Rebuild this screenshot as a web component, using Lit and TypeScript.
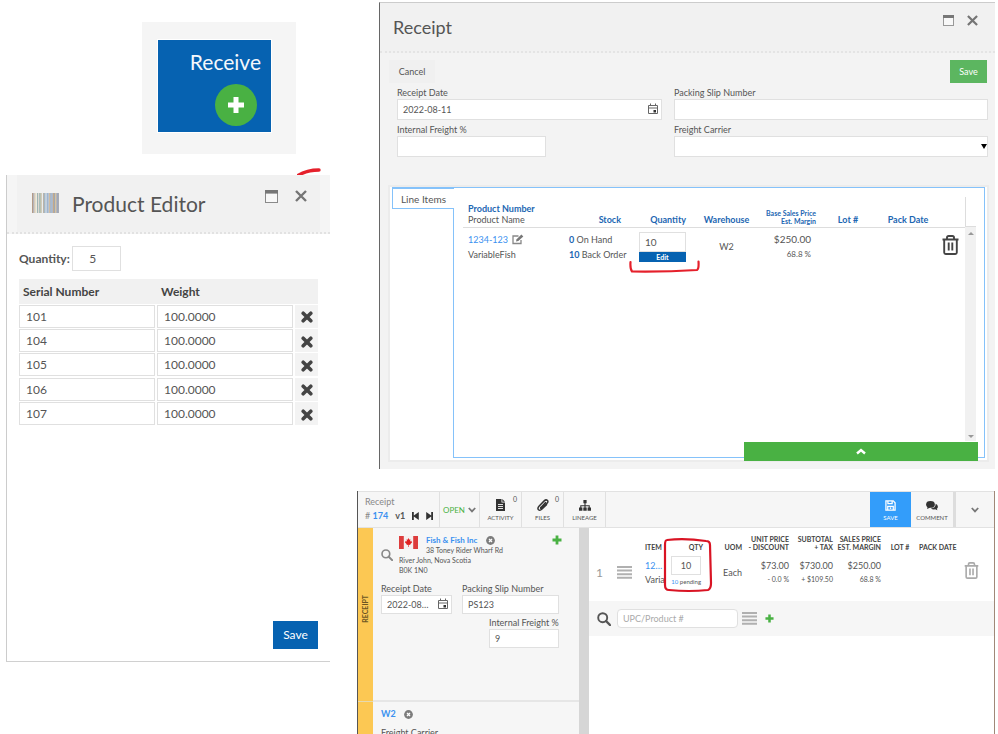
import { LitElement, html, css, svg } from "lit";
import { customElement, state } from "lit/decorators.js";

const closeIcon = html`<svg viewBox="0 0 12 12" width="12" height="12" aria-hidden="true"><path d="M1 1L11 11M11 1L1 11" stroke="#757575" stroke-width="2.4" fill="none"/></svg>`;
const windowIcon = html`<svg viewBox="0 0 13 13" width="13" height="13" aria-hidden="true"><rect x=".5" y=".5" width="12" height="12" fill="#f8f8f8" stroke="#8a8a8a"/><rect width="13" height="3.6" fill="#777"/></svg>`;
const smallWindowIcon = html`<svg viewBox="0 0 11 11" width="11" height="11" aria-hidden="true"><rect x=".5" y=".5" width="10" height="10" fill="#f8f8f8" stroke="#999"/><rect width="11" height="3" fill="#777"/></svg>`;
const smallCloseIcon = html`<svg viewBox="0 0 12 12" width="11" height="11" aria-hidden="true"><path d="M1 1L11 11M11 1L1 11" stroke="#757575" stroke-width="2.4" fill="none"/></svg>`;
const calendarIcon = html`<svg viewBox="0 0 10 12" width="10" height="12" aria-hidden="true"><path d="M.5 2.5H9.5V10.5H.5ZM.5 5H9.5M2.5 .5V3M7.5 .5V3" fill="none" stroke="#666"/><rect x="5.5" y="7" width="2.5" height="2.5" fill="#333"/></svg>`;
const plusIcon = (size: number) => html`<svg viewBox="0 0 10 10" width=${size} height=${size} aria-hidden="true"><path d="M5 .5V9.5M.5 5H9.5" stroke="#49b143" stroke-width="2.8"/></svg>`;
const crossIcon = html`<svg viewBox="0 0 12 12" width="12" height="12" aria-hidden="true"><path d="M2.2 2.2L9.8 9.8M9.8 2.2L2.2 9.8" stroke="#444" stroke-width="3.6" stroke-linecap="round"/></svg>`;
const searchIcon = (size: number, color: string) => html`<svg viewBox="0 0 14 14" width=${size} height=${size} aria-hidden="true"><circle cx="5.7" cy="5.7" r="4.5" fill="none" stroke=${color} stroke-width="1.9"/><path d="M9 9L13 13" stroke=${color} stroke-width="2.4" stroke-linecap="round"/></svg>`;
const barsIcon = html`<svg viewBox="0 0 15 13" width="15" height="13" aria-hidden="true"><path d="M0 1H15M0 4.6H15M0 8.2H15M0 11.8H15" stroke="#b0b0b0" stroke-width="2"/></svg>`;
const trashIcon = (w: number, h: number, color: string) => html`<svg viewBox="0 0 17 20" width=${w} height=${h} aria-hidden="true"><path d="M.5 4.5H16.5M5 4V2.6Q5 1 6.6 1H10.4Q12 1 12 2.6V4M2.2 4.5V17.5Q2.2 19 3.7 19H13.3Q14.8 19 14.8 17.5V4.5M6.7 7.5V15.5M10.3 7.5V15.5" fill="none" stroke=${color} stroke-width="1.9"/></svg>`;
const clearIcon = html`<svg viewBox="0 0 9 9" width="9" height="9" aria-hidden="true"><circle cx="4.5" cy="4.5" r="4.4" fill="#7d7d7d"/><path d="M3 3L6 6M6 3L3 6" stroke="#fff" stroke-width="1.3"/></svg>`;
const chevronIcon = html`<svg viewBox="0 0 8 6" width="8" height="6" aria-hidden="true"><path d="M.8 1L4 4.4L7.2 1" fill="none" stroke="#777" stroke-width="1.8"/></svg>`;
const editIcon = html`<svg viewBox="0 0 12 11" width="12" height="11" aria-hidden="true"><path d="M9 6V9.5H1V2H6.5" fill="none" stroke="#888" stroke-width="1.3"/><path d="M4 7.5L4.6 5.3L9.4 .6L11.3 2.4L6.3 7.1Z" fill="#777"/></svg>`;
const documentIcon = html`<svg viewBox="0 0 9 12" width="9" height="12" aria-hidden="true"><path d="M0 0H5.5V3.5H9V12H0Z M6.3 0L9 2.8H6.3Z" fill="#333"/><path d="M2 5.5H7M2 7.5H7M2 9.5H7" stroke="#f6f6f6" stroke-width=".9"/></svg>`;
const clipIcon = html`<svg viewBox="0 0 12 12" width="12" height="12" aria-hidden="true"><path d="M8.6 3.6L4.2 8.2Q3.2 9 3.9 9.6Q4.5 10 5.4 9.1L9.8 4.6Q11.7 2.6 10.3 1.3Q8.9 .2 7.2 1.9L2.2 7Q.1 9.3 1.5 10.7Q3 12 5 10L9.5 5.6" fill="none" stroke="#333" stroke-width="1.5" stroke-linecap="round"/></svg>`;
const treeIcon = html`<svg viewBox="0 0 12 11" width="12" height="11" aria-hidden="true"><path d="M6 2V9M1.8 9V5.7H10.2V9" fill="none" stroke="#333" stroke-width="1.1"/><path d="M4.4 0H7.6V3.2H4.4ZM0 7.5H3.4V10.7H0ZM4.3 7.5H7.7V10.7H4.3ZM8.6 7.5H12V10.7H8.6Z" fill="#333"/></svg>`;
const diskIcon = html`<svg viewBox="0 0 12 12" width="11" height="11" aria-hidden="true"><path d="M1 1H9L11 3V11H1Z M3.2 1V4H7.8V1 M3 11V7H9V11" fill="none" stroke="#fff" stroke-width="1.4"/><circle cx="6" cy="8.8" r="1" fill="#fff"/></svg>`;
const chatIcon = html`<svg viewBox="0 0 13 11" width="12" height="10" aria-hidden="true"><ellipse cx="4.8" cy="3.8" rx="4.8" ry="3.7" fill="#333"/><path d="M1.8 6L1 8.7L4.8 7.2Z" fill="#333"/><path d="M10.6 3Q13 4.2 13 6.2Q13 7.6 11.8 8.4L12.5 10.3L9.9 9.2Q7 9.6 5.3 8.2Q10.4 8 10.6 3Z" fill="#333"/></svg>`;
const stepIcon = (back: boolean) => html`<svg viewBox="0 0 7 8" width="7" height="8" aria-hidden="true">${back
  ? svg`<path d="M0 0H1.8V3.4L6.8 0V8L1.8 4.6V8H0Z" fill="#333"/>`
  : svg`<path d="M7 0H5.2V3.4L.2 0V8L5.2 4.6V8H7Z" fill="#333"/>`}</svg>`;
const flagIcon = html`<svg class="flag" viewBox="0 0 19 13" width="19" height="13" role="img" aria-label="Canada"><rect width="19" height="13" fill="#f5f0f0"/><path d="M0 0H4.8V13H0ZM14.2 0H19V13H14.2Z" fill="#dd3c3c"/><path d="M9.5 2L10.4 3.8L11.4 3.3L11.1 5.6L12.7 4.8L12.5 5.9L13.2 6.3L11.2 8.2L11.4 9L9.8 8.8V11H9.2V8.8L7.6 9L7.8 8.2L5.8 6.3L6.5 5.9L6.3 4.8L7.9 5.6L7.6 3.3L8.6 3.8Z" fill="#e02020"/></svg>`;
const barcodeColors = ["#b39b86", "#a9a9b5", "#d8c8a8", "#f4f0e4", "#9fb3b3", "#ddd6cf", "#84a9a3", "#c9bda0", "#e9eef0", "#b8b0a4", "#8fa9bd", "#c8d4dd", "#9db4d0", "#b7c4d2", "#cbb293", "#8aa4c4", "#a4b5cc", "#c4a989", "#9aa3ad", "#d5b98c", "#8796b4", "#a8abb3"];
const barcodeIcon = html`<svg viewBox="0 0 27 20" width="27" height="20" aria-hidden="true">${barcodeColors.map((c, i) => svg`<rect x=${(i * 27) / 22} width="1.25" height="20" fill=${c}/>`)}</svg>`;

@customElement("app-root")
export class AppRoot extends LitElement {
  @state() private serials = ["101", "104", "105", "106", "107"];

  static styles = css`
    :host {
      display: grid;
      grid-template-columns: 330px minmax(0, 1fr);
      column-gap: 27px;
      height: 100vh;
      overflow: hidden;
      padding-right: 3px;
      box-sizing: border-box;
      background: #fff;
      color: #555;
      font-family: Lato, "Open Sans", sans-serif;
      font-size: 10px;
      line-height: 12px;
    }
    * { box-sizing: border-box; }
    svg { display: block; flex: none; }
    button, input, select { font: inherit; color: inherit; margin: 0; border-radius: 0; }
    button { border: 0; padding: 0; background: none; cursor: pointer; }
    input, select { display: block; width: 100%; min-width: 0; background: #fff; border: 1px solid #e0e0e0; padding: 0 5px; text-overflow: ellipsis; }
    a { color: #3a91f0; text-decoration: none; }
    h2 { margin: 0; font-weight: 400; color: #555; }
    table { border-collapse: collapse; border-spacing: 0; table-layout: fixed; width: 100%; }
    th, td { padding: 0; text-align: left; white-space: nowrap; }
    .left { display: flex; flex-direction: column; padding: 22px 0 0 6px; }
    .right { display: flex; flex-direction: column; padding-top: 2px; min-width: 0; }

    .tile-frame { align-self: flex-end; margin-right: 34px; padding: 17px 24px 21px 15px; background: #f5f5f5; }
    .tile { display: flex; flex-direction: column; align-items: flex-end; gap: 10px; width: 115px; height: 94px; padding: 10px 10px 0 0; background: #0662b1; border: 1px solid #fff; color: #f4f8fc; font-size: 21px; line-height: 24px; }
    .tile-plus { display: grid; place-items: center; width: 42px; height: 42px; margin-right: 4px; border-radius: 50%; background: #49b143; }

    .editor { position: relative; margin-top: 21px; height: 487px; border-left: 1px solid #ccc; border-bottom: 1px solid #d0d0d0; display: flex; flex-direction: column; }
    .editor-head { display: flex; align-items: center; height: 59px; padding: 0 10px; background: #f5f5f5; border-bottom: 2px dotted #e2e2e2; }
    .editor-bar { flex: 1; display: flex; align-items: center; align-self: stretch; padding: 0 13px 0 15px; background: #f1f1f1; }
    .editor-bar > svg { margin-bottom: 2px; }
    .editor-bar h2 { margin-left: 13px; flex: 1; font-size: 21px; line-height: 26px; }
    .tools { display: flex; align-items: center; gap: 17px; margin-bottom: 15px; }
    .editor-body { flex: 1; display: flex; flex-direction: column; padding: 12px; font-size: 12px; line-height: 14px; }
    .qty-row { display: flex; align-items: center; gap: 2px; font-weight: 700; color: #555; }
    .qty-row input { width: 49px; height: 25px; text-align: center; padding-right: 12px; font-weight: 400; }
    .serials { margin-top: 8px; height: 147px; }
    .serials thead th { background: #f1f1f1; height: 25px; padding-left: 4px; color: #444; }
    .serials td { padding-right: 2px; }
    .serials td:last-child { padding-right: 0; }
    .serials input { height: 23px; padding: 0 7px 0 6px; }
    .c-button { width: 23px; }
    .c-serial { width: 138px; }
    .remove { display: grid; place-items: center; width: 23px; height: 23px; padding-top: 2px; background: #f3f3f3; }
    .primary { align-self: flex-end; margin-top: auto; width: 45px; height: 28px; background: #0662b1; color: #fff; }

    .modal { margin-left: 22px; height: 467px; background: #f3f3f3; border-left: 1px solid #666; border-top: 1px solid #ccc; padding-bottom: 7px; display: flex; flex-direction: column; font-size: 9px; }
    .modal-head { display: flex; align-items: center; justify-content: space-between; height: 50px; padding: 0 17px 0 13px; background: #f1f1f1; border-bottom: 2px dotted #e4e4e4; }
    .modal-head h2 { font-size: 18px; line-height: 22px; }
    .modal-head .tools { margin-bottom: 14px; gap: 13px; }
    .actions { display: flex; justify-content: space-between; padding: 7px 8px 0 9px; }
    .cancel { width: 46px; height: 23px; background: #f0f0f0; }
    .save { width: 37px; height: 23px; background: #5cb660; color: #fff; }
    .form { display: grid; grid-template-columns: 265px minmax(0, 1fr); column-gap: 12px; row-gap: 4px; padding: 4px 7px 0 17px; }
    .field label { display: block; }
    .field input, .field select { height: 21px; }
    .date { position: relative; }
    .date button { position: absolute; right: 4px; top: 4px; }
    .field .half { width: 149px; }
    .carrier { position: relative; }
    .carrier select { appearance: none; }
    .carrier svg { position: absolute; right: 1px; bottom: 8px; pointer-events: none; }
    .lines { position: relative; flex: 1; display: flex; margin: 28px 6px 0 8px; padding: 0 2px 2px; background: #fff; border: 2px solid #ececec; }
    .tab { width: 62px; height: 22px; margin-right: -1px; z-index: 1; background: #fff; border: 1px solid #85c2fa; border-top-width: 2px; border-right: 0; font-size: 10px; }
    .lines-body { flex: 1; min-width: 0; display: flex; align-items: stretch; border: 1px solid #85c2fa; padding: 9px 8px 16px 9px; }
    .lines-body table { align-self: flex-start; flex: 1; width: 0; }
    .lines-body th { color: #1c66b2; vertical-align: bottom; height: 30px; padding-bottom: 2px; line-height: 11px; }
    .lines-body thead { border-bottom: 1px solid #ddd; }
    .lines-body th:first-child, .lines-body td:first-child { padding-left: 5px; }
    .lines-body td { vertical-align: top; padding-top: 4px; line-height: 15px; }
    .lines-body .sub { font-weight: 400; color: #555; display: block; }
    .lines-body .mini { font-size: 7px; line-height: 8px; }
    .lines-body .center { text-align: center; }
    .lines-body td.center { vertical-align: middle; }
    .lines-body .house { padding-left: 4px; }
    .lines-body .end { text-align: right; }
    .lines-body .stock { padding-right: 8px; }
    .lines-body td.price { padding-right: 5px; font-size: 10px; }
    .lines-body .small { display: block; font-size: 8px; }
    .lines-body b { color: #1c66b2; }
    .lines-body .bin { padding: 7px 0 0 6px; }
    .name-line { display: flex; align-items: center; gap: 4px; }
    .rail { width: 11px; display: flex; flex-direction: column; }
    .rail-head { height: 30px; border-left: 1px solid #ddd; border-bottom: 1px solid #ddd; }
    .rail-track { flex: 1; display: flex; flex-direction: column; justify-content: space-between; align-items: center; padding: 5px 0 3px; background: #f1f1f1; }
    .qty-box { width: 47px; margin-left: auto; }
    .qty-box input { height: 20px; font-size: 10px; }
    .qty-box button { display: block; width: 100%; height: 10px; background: #0662b1; color: #fff; font-size: 7px; line-height: 10px; font-weight: 700; }
    .drawer { position: absolute; right: 9px; bottom: -1px; width: 234px; height: 19px; display: grid; place-items: center; background: #49b143; }

    .receipt { position: relative; flex: 1; min-height: 0; margin-top: 22px; display: flex; flex-direction: column; border-left: 1px solid #555; border-right: 1px solid #a08878; background: #fff; }
    .toolbar { display: flex; flex: none; height: 37px; background: #f6f6f6; border-top: 1px solid #e2e2e2; border-bottom: 1px solid #e2e2e2; }
    .doc { width: 82px; padding: 5px 0 0 7px; border-right: 1px solid #e0e0e0; color: #888; font-size: 9px; line-height: 10px; }
    .doc-line { display: flex; align-items: center; gap: 7px; margin-top: 4px; }
    .doc-line b { color: #555; }
    .doc-line a b, .cust-name b { color: #3a91f0; }
    .status { width: 40px; display: flex; align-items: center; justify-content: center; gap: 3px; border-right: 1px solid #e0e0e0; color: #49b143; font-size: 8px; }
    .tool { position: relative; width: 42px; display: flex; flex-direction: column; align-items: center; justify-content: flex-end; gap: 3px; padding-bottom: 5px; border-right: 1px solid #e0e0e0; font-size: 6px; line-height: 8px; }
    .badge { position: absolute; top: 3px; right: 4px; font-size: 7px; }
    .tool-save { margin-left: auto; width: 41px; background: #339dfa; color: #fff; border: 0; }
    .tool-comment { border-right: 3px solid #ddd; width: 45px; }
    .more { width: 38px; display: grid; place-items: center; }
    .work { flex: 1; min-height: 0; display: flex; }
    .strip { width: 15px; background: #fcc853; display: flex; flex-direction: column; }
    .strip-top { height: 174px; display: flex; align-items: flex-end; justify-content: center; padding-bottom: 78px; border-bottom: 1px solid #e6d9b0; }
    .strip-text { writing-mode: vertical-rl; transform: rotate(180deg); font-size: 7px; line-height: 9px; font-weight: 700; color: #6b5524; }
    .side { width: 206px; background: #f6f6f6; overflow: hidden; font-size: 9px; line-height: 10px; }
    .side-top { height: 174px; border-bottom: 2px solid #e6e6e6; padding: 7px 20px 0 8px; }
    .customer { display: grid; grid-template-columns: 18px 27px 1fr 10px; font-size: 7px; line-height: 10px; }
    .customer .find { grid-row: 1 / 5; align-self: center; }
    .cust-name { display: flex; align-items: center; gap: 9px; font-size: 8px; }
    .flag { grid-row: 1 / 3; grid-column: 2; margin-top: 1px; }
    .add { grid-column: 4; grid-row: 1; justify-self: start; margin-left: 3px; }
    .addr { grid-column: 3 / 5; }
    .wide { grid-column: 2 / 5; }
    .pair { display: grid; grid-template-columns: 71px 97px; column-gap: 10px; margin-top: 8px; row-gap: 3px; }
    .pair label { display: block; line-height: 12px; white-space: nowrap; }
    .pair input { height: 19px; }
    .pair .date input { padding-right: 22px; }
    .pair .date button { top: 3px; }
    .freight { grid-column: 2; padding-left: 27px; }
    .depot { display: flex; align-items: center; gap: 8px; padding: 7px 8px 9px; }
    .side-label { padding-left: 8px; }
    .divider { width: 10px; background: #d6d6d6; }
    .main { flex: 1; min-width: 0; }
    .items { height: 73px; font-size: 9px; }
    .items th { font-size: 7px; line-height: 8px; text-align: right; vertical-align: bottom; height: 28px; padding-bottom: 5px; color: #444; }
    .items td { text-align: right; vertical-align: top; padding-top: 3px; line-height: 14px; }
    .items .start { text-align: left; padding-left: 6px; }
    .items .mid { vertical-align: middle; text-align: center; padding: 0 0 12px; }
    .items .uom { text-align: right; }
    .items .bin { padding-right: 6px; }
    .items .th-mid { text-align: center; }
    .items .num { color: #999; font-size: 12px; }
    .items .small { font-size: 7px; line-height: 12px; display: block; }
    .items td.qty { padding: 0 2px 0 0; }
    .items .tiny { font-size: 6px; line-height: 13px; display: block; }
    .items input { height: 19px; text-align: center; padding: 0; }
    .items .mid svg { margin: 0 auto; }
    .add-row { display: flex; align-items: center; height: 35px; padding: 0 8px; background: #f6f6f6; gap: 4px; }
    .add-row input { width: 121px; height: 19px; border-radius: 4px; font-size: 9px; margin-left: 2px; }
    .add-row input::placeholder { color: #aaa; opacity: 1; }
    .add-row .plus { margin-left: 4px; }
    .ink-tick { position: absolute; top: -7px; right: 9px; }
    .ink-bracket { position: absolute; left: 239px; top: 73px; }
    .ink-box { position: absolute; left: 305px; top: 46px; pointer-events: none; }
  `;

  private remove(i: number) {
    this.serials = this.serials.filter((_, n) => n !== i);
  }

  private renderEditor() {
    return html`
      <section class="editor">
        <svg class="ink-tick" width="24" height="7" viewBox="0 0 24 7" aria-hidden="true"><path d="M1 7.5Q10 2 22 2" fill="none" stroke="#e5202b" stroke-width="3.4" stroke-linecap="round"/></svg>
        <header class="editor-head">
          <div class="editor-bar">
            ${barcodeIcon}
            <h2>Product Editor</h2>
            <div class="tools">
              <button aria-label="Maximize">${windowIcon}</button>
              <button aria-label="Close">${closeIcon}</button>
            </div>
          </div>
        </header>
        <div class="editor-body">
          <div class="qty-row"><label for="qty">Quantity:</label><input id="qty" .value=${"5"}></div>
          <table class="serials">
            <colgroup><col class="c-serial"><col><col class="c-button"></colgroup>
            <thead><tr><th>Serial Number</th><th>Weight</th><th></th></tr></thead>
            <tbody>
              ${this.serials.map((s, i) => html`<tr>
                <td><input aria-label="Serial Number" .value=${s}></td>
                <td><input aria-label="Weight" .value=${"100.0000"}></td>
                <td><button class="remove" aria-label="Remove" @click=${() => this.remove(i)}>${crossIcon}</button></td>
              </tr>`)}
            </tbody>
          </table>
          <button class="primary">Save</button>
        </div>
      </section>`;
  }

  private renderModal() {
    return html`
      <section class="modal">
        <header class="modal-head">
          <h2>Receipt</h2>
          <div class="tools">
            <button aria-label="Maximize">${smallWindowIcon}</button>
            <button aria-label="Close">${smallCloseIcon}</button>
          </div>
        </header>
        <div class="actions"><button class="cancel">Cancel</button><button class="save">Save</button></div>
        <div class="form">
          <div class="field">
            <label for="date">Receipt Date</label>
            <div class="date"><input id="date" .value=${"2022-08-11"}><button aria-label="Pick a date">${calendarIcon}</button></div>
          </div>
          <div class="field"><label for="slip">Packing Slip Number</label><input id="slip"></div>
          <div class="field"><label for="freight">Internal Freight %</label><input id="freight" class="half"></div>
          <div class="field carrier">
            <label for="carrier">Freight Carrier</label>
            <select id="carrier"><option></option></select>
            <svg width="6" height="5" viewBox="0 0 6 5" aria-hidden="true"><path d="M0 0H6L3 5Z" fill="#000"/></svg>
          </div>
        </div>
        <div class="lines">
          <button class="tab">Line Items</button>
          <div class="lines-body">
            <table>
              <colgroup><col style="width:106px"><col style="width:60px"><col style="width:57px"><col style="width:77px"><col style="width:53px"><col style="width:64px"><col style="width:56px"><col></colgroup>
              <thead><tr>
                <th>Product Number<span class="sub">Product Name</span></th>
                <th class="end stock">Stock</th><th class="end">Quantity</th><th class="center house">Warehouse</th>
                <th class="end mini">Base Sales Price<br>Est. Margin</th>
                <th class="center">Lot #</th><th class="center">Pack Date</th><th></th>
              </tr></thead>
              <tbody><tr>
                <td><span class="name-line"><a href="#product">1234-123</a>${editIcon}</span>VariableFish</td>
                <td><b>0</b> On Hand<br><b>10</b> Back Order</td>
                <td><div class="qty-box"><input aria-label="Quantity" .value=${"10"}><button>Edit</button></div></td>
                <td class="center house">W2</td>
                <td class="end price">$250.00<span class="small">68.8 %</span></td>
                <td></td><td></td>
                <td class="bin"><button aria-label="Delete line">${trashIcon(17, 20, "#444")}</button></td>
              </tr></tbody>
            </table>
            <div class="rail" aria-hidden="true">
              <div class="rail-head"></div>
              <div class="rail-track">
                <svg width="6" height="3" viewBox="0 0 6 3"><path d="M0 3L3 0L6 3Z" fill="#999"/></svg>
                <svg width="6" height="3" viewBox="0 0 6 3"><path d="M0 0H6L3 3Z" fill="#999"/></svg>
              </div>
            </div>
          </div>
          <button class="drawer" aria-label="Expand totals"><svg width="10" height="7" viewBox="0 0 10 7" aria-hidden="true"><path d="M1 5.5L5 2L9 5.5" fill="none" stroke="#fff" stroke-width="2.4"/></svg></button>
          <svg class="ink-bracket" width="72" height="14" viewBox="0 0 72 14" aria-hidden="true"><path d="M1.5 2Q1 9 3 11.5Q36 12 68 10Q70 9 69.5 1.5" fill="none" stroke="#e5202b" stroke-width="2.2" stroke-linecap="round"/></svg>
        </div>
      </section>`;
  }

  private renderReceipt() {
    return html`
      <section class="receipt">
        <header class="toolbar">
          <div class="doc">Receipt
            <div class="doc-line"><span># <a href="#174"><b>174</b></a></span><b>v1</b><button aria-label="First">${stepIcon(true)}</button><button aria-label="Last">${stepIcon(false)}</button></div>
          </div>
          <button class="status">OPEN ${chevronIcon}</button>
          <button class="tool">${documentIcon}ACTIVITY<span class="badge">0</span></button>
          <button class="tool">${clipIcon}FILES<span class="badge">0</span></button>
          <button class="tool">${treeIcon}LINEAGE</button>
          <button class="tool tool-save">${diskIcon}SAVE</button>
          <button class="tool tool-comment">${chatIcon}COMMENT</button>
          <button class="more" aria-label="More">${chevronIcon}</button>
        </header>
        <div class="work">
          <div class="strip"><div class="strip-top"><span class="strip-text">RECEIPT</span></div></div>
          <aside class="side">
            <div class="side-top">
              <div class="customer">
                <button class="find" aria-label="Find customer">${searchIcon(12, "#888")}</button>
                ${flagIcon}
                <span class="cust-name"><a href="#customer"><b>Fish &amp; Fish Inc</b></a><button aria-label="Clear customer">${clearIcon}</button></span>
                <button class="add" aria-label="Add customer">${plusIcon(10)}</button>
                <span class="addr">38 Toney Rider Wharf Rd</span>
                <span class="wide">River John, Nova Scotia</span>
                <span class="wide">B0K 1N0</span>
              </div>
              <div class="pair">
                <div><label for="date2">Receipt Date</label><div class="date"><input id="date2" .value=${"2022-08-11"}><button aria-label="Pick a date">${calendarIcon}</button></div></div>
                <div><label for="slip2">Packing Slip Number</label><input id="slip2" .value=${"PS123"}></div>
                <div class="freight"><label for="freight2">Internal Freight %</label><input id="freight2" .value=${"9"}></div>
              </div>
            </div>
            <div class="depot"><a href="#w2"><b>W2</b></a><button aria-label="Clear warehouse">${clearIcon}</button></div>
            <div class="side-label">Freight Carrier</div>
          </aside>
          <div class="divider"></div>
          <main class="main">
            <table class="items">
              <colgroup><col style="width:21px"><col style="width:29px"><col style="width:32px"><col style="width:32px"><col style="width:39px"><col style="width:47px"><col style="width:44px"><col style="width:48px"><col style="width:38px"><col style="width:36px"><col></colgroup>
              <thead><tr>
                <th></th><th></th><th class="start">ITEM</th><th>QTY</th><th>UOM</th><th>UNIT PRICE<br>- DISCOUNT</th><th>SUBTOTAL<br>+ TAX</th><th>SALES PRICE<br>EST. MARGIN</th><th class="th-mid">LOT #</th><th class="th-mid">PACK DATE</th><th></th>
              </tr></thead>
              <tbody><tr>
                <td class="mid num">1</td><td class="mid">${barsIcon}</td>
                <td class="start"><a href="#item">12…</a><br>Varia</td>
                <td class="qty"><input aria-label="Quantity" .value=${"10"}><span class="tiny"><a href="#pending">10</a> pending</span></td>
                <td class="mid uom">Each</td>
                <td>$73.00<span class="small">- 0.0 %</span></td>
                <td>$730.00<span class="small">+ $109.50</span></td>
                <td>$250.00<span class="small">68.8 %</span></td>
                <td></td><td></td>
                <td class="mid bin"><button aria-label="Delete line">${trashIcon(15, 17, "#aaa")}</button></td>
              </tr></tbody>
            </table>
            <div class="add-row">
              ${searchIcon(14, "#555")}
              <input aria-label="UPC/Product #" placeholder="UPC/Product #">
              ${barsIcon}
              <button class="plus" aria-label="Add product">${plusIcon(9)}</button>
            </div>
          </main>
        </div>
        <svg class="ink-box" width="50" height="56" viewBox="0 0 50 56" aria-hidden="true"><path d="M4 3Q2 3 2 8L2 48Q2 53 6 53Q26 55 45 53Q48 52 48 46L47 8Q47 4 43 4Q22 1 4 3Z" fill="none" stroke="#d91424" stroke-width="2.2"/></svg>
      </section>`;
  }

  render() {
    return html`
      <div class="left">
        <div class="tile-frame"><button class="tile">Receive<span class="tile-plus"><svg width="18" height="18" viewBox="0 0 18 18" aria-hidden="true"><path d="M9 1V17M1 9H17" stroke="#fff" stroke-width="5"/></svg></span></button></div>
        ${this.renderEditor()}
      </div>
      <div class="right">${this.renderModal()}${this.renderReceipt()}</div>`;
  }
}
